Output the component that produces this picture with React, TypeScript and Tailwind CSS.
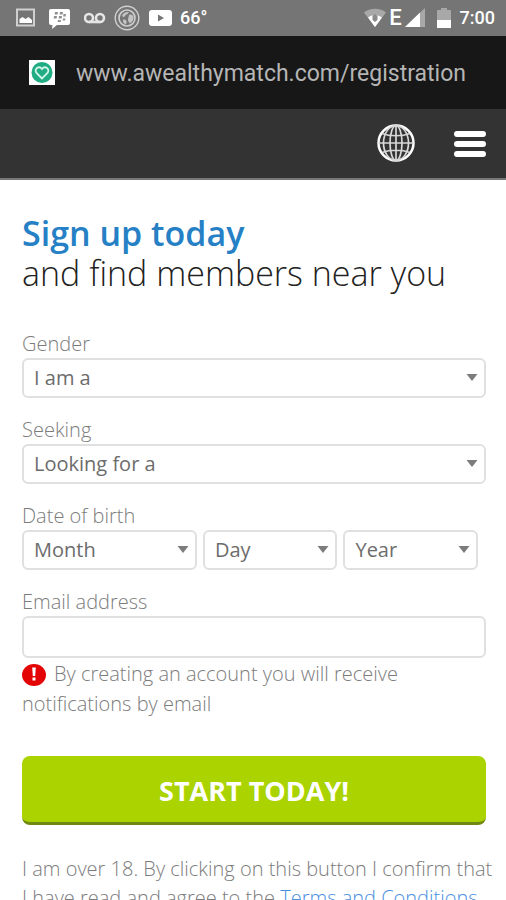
import type { ReactNode } from "react";

type SelectFieldProps = {
  id: string;
  label: string;
  placeholder: string;
  options: string[];
  hideLabel?: boolean;
  className?: string;
};

function SelectField({ id, label, placeholder, options, hideLabel = false, className = "" }: SelectFieldProps) {
  return (
    <div className={className}>
      {!hideLabel && (
        <label htmlFor={id} className="block h-7 leading-7 font-light text-[#7c7c7c]">
          {label}
        </label>
      )}
      <div className="relative">
        <select
          id={id}
          defaultValue=""
          aria-label={hideLabel ? label : undefined}
          className="block h-10 w-full appearance-none rounded-md border-2 border-[#e0e0e0] bg-white pr-7 pl-[10px] text-[#6c6c6c]"
        >
          <option value="">{placeholder}</option>
          {options.map((option) => (
            <option key={option}>{option}</option>
          ))}
        </select>
        <svg className="pointer-events-none absolute top-4 right-2 h-2 w-3" viewBox="0 0 12 8" aria-hidden="true">
          <path d="M0.5 0h11L6 7z" fill="#7c7c7c" />
        </svg>
      </div>
    </div>
  );
}

function StatusBar() {
  return (
    <div className="flex h-9 items-center justify-between bg-[#757575] pr-[11px] pl-4 font-['Roboto',sans-serif] text-lg font-medium text-white">
      <div className="flex items-center gap-3">
        <svg className="h-5 w-5" viewBox="0 0 20 20" aria-hidden="true">
          <rect x="1" y="1.500" width="17" height="16" fill="none" stroke="#d0d0d0" strokeWidth="2" />
          <path d="M3.500 15v-4l3-2 3 2 3-2 3.500 3v3z" fill="#fff" />
        </svg>
        <svg className="h-6 w-6" viewBox="0 0 24 24" aria-hidden="true">
          <path d="M3 3h17a2 2 0 0 1 2 2v12a2 2 0 0 1-2 2H9l-5 4 .5-4H3a2 2 0 0 1-2-2V5a2 2 0 0 1 2-2z" fill="#fff" />
          <path
            d="M7 6h3l-.4 2.500h-3zM12 6h3l-.4 2.500h-3zM6 10h3l-.4 2.500h-3zM11 10h3l-.4 2.500h-3zM15.500 8h2.500l-.4 2.500h-2.500zM10 14h3l-.4 2h-3zM15 12.500h2.500l-.4 2h-2.500z"
            fill="#909090"
          />
        </svg>
        <svg className="h-6 w-[22px]" viewBox="0 0 22 24" aria-hidden="true">
          <g fill="none" stroke="#e6e6e6" strokeWidth="2.6">
            <circle cx="5" cy="12" r="4" />
            <circle cx="16" cy="12" r="4" />
            <path d="M5 16h11" />
          </g>
        </svg>
        <svg className="-mx-1 h-[26px] w-[26px]" viewBox="0 0 26 26" fill="none" stroke="#cfcfcf" aria-hidden="true">
          <circle cx="13" cy="13" r="11.800" strokeWidth="1.400" />
          <circle cx="13" cy="13" r="8" strokeWidth="1.600" />
          <path d="M8 11c1-3 4-4.500 7-4-1 1-1 2-2.500 2.500S11 12 9.500 12zM15 10c2-1 4 0 4.500 2s-1 5-4 6.500c0-2-2-2-1.500-4zM9 15c1-1 3 0 3.500 1s0 3-1 3-3-2-2.500-4z" fill="#c4c4c4" stroke="none" />
        </svg>
        <svg className="h-6 w-6" viewBox="0 0 24 24" aria-hidden="true">
          <rect x="1" y="4" width="23" height="16" rx="3" fill="#fff" />
          <path d="M10 8.500v7l6-3.500z" fill="#757575" />
        </svg>
        <span className="-ml-1">66°</span>
      </div>
      <div className="flex items-center">
        <svg className="h-6 w-6" viewBox="0 0 24 24" aria-hidden="true">
          <path d="M1 6.500C7 1.500 17 1.500 23 6.500L12 21z" fill="#a8a8a8" />
          <path d="M5 11.500c4-3 10-3 14 0L12 21z" fill="#fff" />
          <path d="M9.500 14v-4l2.500-2 2.500 2v4L12 16z" fill="#8b8b8b" />
        </svg>
        <span className="ml-0.5 text-[22px]">E</span>
        <svg className="ml-0.5 h-6 w-6" viewBox="0 0 24 24" aria-hidden="true">
          <path d="M1 21L21 2v19z" fill="#a8a8a8" />
          <path d="M1 21L16 6.500V21z" fill="#fff" />
        </svg>
        <svg className="ml-2 h-6 w-4" viewBox="0 0 16 24" aria-hidden="true">
          <path d="M1 4h4V2h6v2h4v10H1z" fill="#a8a8a8" />
          <path d="M1 14h14v8H1z" fill="#fff" />
        </svg>
        <time className="ml-2">7:00</time>
      </div>
    </div>
  );
}

function AddressBar() {
  return (
    <div className="flex h-[73px] items-center gap-5 bg-[#171717] px-7 font-['Roboto',sans-serif] text-[23px] text-[#b5b5b5]">
      <svg className="h-7 w-7 shrink-0" viewBox="0 0 28 28" aria-hidden="true">
        <rect x="1" y="1" width="26" height="25" fill="#fff" />
        <circle cx="14" cy="13.500" r="10.500" fill="#20ad84" />
        <path d="M14 19.500l-5.500-5.500c-3-4 2.500-8 5.500-4 3-4 8.500 0 5.500 4z" fill="none" stroke="#d5f5e9" strokeWidth="1.800" />
      </svg>
      <span className="pt-1">www.awealthymatch.com/registration</span>
    </div>
  );
}

function IconButton({ label, children }: { label: string; children: ReactNode }) {
  return (
    <button type="button" aria-label={label} className="flex h-10 w-10 items-center justify-center">
      {children}
    </button>
  );
}

function SiteHeader() {
  return (
    <header className="flex h-[71px] items-center justify-end gap-[34px] border-b-2 border-[#777] bg-[#333] pr-4">
      <IconButton label="Language">
        <svg className="h-10 w-10" viewBox="0 0 40 40" fill="none" stroke="#fff" aria-hidden="true">
          <circle cx="20" cy="19" r="17.500" strokeWidth="2.500" />
          <g strokeWidth="1.700" stroke="#d8d8d8">
            <ellipse cx="20" cy="19" rx="12.500" ry="17.500" />
            <ellipse cx="20" cy="19" rx="6" ry="17.500" />
            <path d="M20 1.500v35M2.500 19h35M6 9.500c8 3 20 3 28 0M6 28.500c8-3 20-3 28 0" />
          </g>
        </svg>
      </IconButton>
      <IconButton label="Menu">
        <svg className="h-10 w-10" viewBox="0 0 40 40" fill="none" stroke="#fff" strokeWidth="6" strokeLinecap="round" aria-hidden="true">
          <path d="M7 10h26M7 20h26M7 30h26" />
        </svg>
      </IconButton>
    </header>
  );
}

const months = ["January", "February", "March", "April", "May", "June", "July", "August", "September", "October", "November", "December"];
const days = Array.from({ length: 31 }, (_, i) => String(i + 1));
const years = Array.from({ length: 80 }, (_, i) => String(2000 - i));

export default function App() {
  return (
    <div className="min-h-screen bg-white">
      <StatusBar />
      <AddressBar />
      <SiteHeader />
      <main className="pt-[33px] pr-5 pl-[22px] font-['Open_Sans',sans-serif] text-xl">
        <h1 className="text-[34px] leading-10 font-light text-[#222]">
          <span className="block font-semibold text-[#2580c5]">Sign up today</span>
          and find members near you
        </h1>
        <form className="mt-[37px] flex flex-col gap-[18px]" onSubmit={(event) => event.preventDefault()}>
          <SelectField id="gender" label="Gender" placeholder="I am a" options={["Man", "Woman"]} />
          <SelectField id="seeking" label="Seeking" placeholder="Looking for a" options={["Man", "Woman"]} />
          <fieldset>
            <legend className="block h-7 leading-7 font-light text-[#7c7c7c]">Date of birth</legend>
            <div className="flex gap-[6px] pr-2">
              <SelectField id="month" label="Month" placeholder="Month" options={months} hideLabel className="grow-[13] basis-0" />
              <SelectField id="day" label="Day" placeholder="Day" options={days} hideLabel className="grow-[10] basis-0" />
              <SelectField id="year" label="Year" placeholder="Year" options={years} hideLabel className="grow-[10] basis-0" />
            </div>
          </fieldset>
          <div>
            <label htmlFor="email" className="block h-7 leading-7 font-light text-[#7c7c7c]">
              Email address
            </label>
            <input
              id="email"
              type="email"
              className="block h-[42px] w-full rounded-md border-2 border-[#e0e0e0] bg-white px-3 text-[#6c6c6c]"
            />
            <p className="pt-px leading-[30px] font-light text-[#7c7c7c]">
              <svg className="mr-2 inline-block h-[22px] w-6 align-[-5px]" viewBox="0 0 24 22" aria-hidden="true">
                <ellipse cx="12" cy="11" rx="12" ry="11" fill="#e30505" />
                <path d="M10.200 3.500h3.600l-.6 8.500h-2.400zM10.500 13.500h3v3h-3z" fill="#fff" />
              </svg>
              By creating an account you will receive notifications by email
            </p>
          </div>
          <button
            type="submit"
            className="mt-[19px] h-[69px] w-full rounded-lg border-b-[3px] border-[#70880f] bg-[#aad300] pt-1 text-[27px] font-bold text-white"
          >
            START TODAY!
          </button>
        </form>
        <p className="mt-[29px] -mr-3 leading-[29px] font-light text-[#7c7c7c]">
          I am over 18. By clicking on this button I confirm that I have read and agree to the{" "}
          <a href="#terms" className="text-[#4a90e2]">
            Terms and Conditions
          </a>
        </p>
      </main>
    </div>
  );
}
